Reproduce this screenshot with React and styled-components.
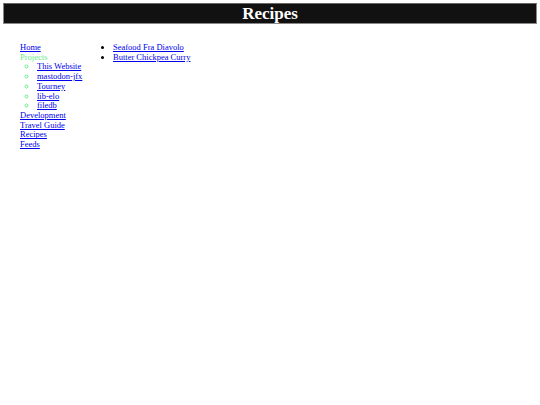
import React from 'react'
import styled, { createGlobalStyle } from 'styled-components';

const GlobalStyle = createGlobalStyle`
    body {
        margin: 3px;
        font-family: "Liberation Serif", "Times New Roman", serif;
        font-size: 8.5px;
        line-height: 9.7px;
        background: #fff;
    }
    a {
        color: #0000ee;
    }
`

const projects = ['This Website', 'mastodon-jfx', 'Tourney', 'lib-elo', 'filedb'];
const recipes = ['Seafood Fra Diavolo', 'Butter Chickpea Curry'];

const App = () => {
    return (
        <>
            <GlobalStyle />
            <Header>Recipes</Header>
            <Page>
                <Nav>
                    <li><a href="#">Home</a></li>
                    <Current>Projects</Current>
                    <li>
                        <SubNav>
                            {projects.map((p, id) => (
                                <li key={id}><a href="#">{p}</a></li>
                            ))}
                        </SubNav>
                    </li>
                    <li><a href="#">Development</a></li>
                    <li><a href="#">Travel Guide</a></li>
                    <li><a href="#">Recipes</a></li>
                    <li><a href="#">Feeds</a></li>
                </Nav>
                <Content>
                    {recipes.map((r, id) => (
                        <li key={id}><a href="#">{r}</a></li>
                    ))}
                </Content>
            </Page>
        </>
    )
}

const Header = styled.h1`
    margin: 0;
    height: 19px;
    line-height: 19px;
    background: #111;
    border: 1px solid #888;
    border-top-color: #666;
    color: #fff;
    text-align: center;
    font-size: 17px;
    font-weight: bold;
`

const Page = styled.div`
    display: flex;
    align-items: flex-start;
    padding-top: 19px;
`

const Nav = styled.ul`
    list-style: none;
    margin: 0;
    padding-left: 17px;
    width: 74px;
`

const Current = styled.li`
    color: #66ee88;
`

const SubNav = styled.ul`
    list-style: circle;
    margin: 0;
    padding-left: 17px;
    color: #66ee88;
`

const Content = styled.ul`
    list-style: disc;
    margin: 0;
    padding-left: 19px;
`

export default App
